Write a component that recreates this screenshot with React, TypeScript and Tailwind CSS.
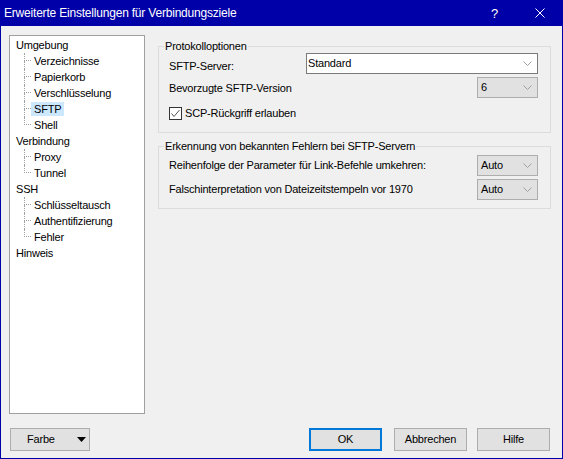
import React from "react";

type Node = { label: string; children: string[] };

const tree: Node[] = [
  {
    label: "Umgebung",
    children: ["Verzeichnisse", "Papierkorb", "Verschlüsselung", "SFTP", "Shell"],
  },
  { label: "Verbindung", children: ["Proxy", "Tunnel"] },
  { label: "SSH", children: ["Schlüsseltausch", "Authentifizierung", "Fehler"] },
  { label: "Hinweis", children: [] },
];

const selected = "SFTP";

const Chevron = () => (
  <svg width="9" height="5" viewBox="0 0 9 5">
    <polyline points="0.5,0.5 4.5,4.5 8.5,0.5" fill="none" stroke="#a0a0a0" strokeWidth="1" />
  </svg>
);

// Ausklappliste: editierbar (weiß) oder nur lesbar (grau)
const Combo = ({ value, editable, className }: { value: string; editable?: boolean; className: string }) => (
  <div
    className={`h-[21px] flex items-center justify-between border pr-[5px] ${
      editable ? "bg-white border-[#7a7a7a] pl-[1px]" : "bg-[#e1e1e1] border-[#adadad] pl-[3px]"
    } ${className}`}
  >
    <span>{value}</span>
    <Chevron />
  </div>
);

const Button = ({ label, primary, className }: { label: string; primary?: boolean; className: string }) => (
  <div
    className={`h-[23px] flex items-center justify-center bg-[#e1e1e1] ${
      primary ? "border-2 border-[#0078d7]" : "border border-[#adadad]"
    } ${className}`}
  >
    {label}
  </div>
);

const TreeView = () => (
  <div className="w-[136px] h-[379px] shrink-0 bg-white border border-[#a0a0a0] pt-[1px]">
    {tree.map((node) => (
      <div key={node.label}>
        <div className="h-[16px] flex items-center pl-[6px]">{node.label}</div>
        {node.children.map((child, i) => {
          const last = i === node.children.length - 1;
          return (
            <div key={child} className="h-[16px] flex ml-[14px]">
              {/* gepunktete Verbindungslinien */}
              <div className="w-[7px] flex flex-col">
                <div className="h-[8px] border-l border-b border-dotted border-[#a0a0a0]" />
                <div className={`flex-1 ${last ? "" : "border-l border-dotted border-[#a0a0a0]"}`} />
              </div>
              <span
                className={`self-center h-[14px] leading-[14px] px-[3px] ${
                  child === selected ? "bg-[#cce8ff]" : ""
                }`}
              >
                {child}
              </span>
            </div>
          );
        })}
      </div>
    ))}
  </div>
);

export default function App() {
  return (
    <div className="w-[563px] h-[459px] flex flex-col border-x border-b border-[#0000a8] font-['Liberation_Sans',Arial,sans-serif] text-[11px] leading-[13px] tracking-[-0.2px] text-black">
      {/* Titelleiste */}
      <div className="h-[26px] shrink-0 bg-[#0000a8] text-white flex items-center">
        <div className="flex-1 pl-[3px] text-[12px]">Erweiterte Einstellungen für Verbindungsziele</div>
        <div className="w-[45px] h-full flex items-center justify-center text-[13px]">?</div>
        <div className="w-[45px] h-full flex items-center justify-center">
          <svg width="10" height="10" viewBox="0 0 10 10">
            <path d="M0.5 0.5 L9.5 9.5 M9.5 0.5 L0.5 9.5" stroke="white" strokeWidth="1" />
          </svg>
        </div>
      </div>

      <div className="flex-1 flex flex-col bg-[#f0f0f0] pt-[9px] pl-[8px] pr-[11px] pb-[7px]">
        <div className="flex gap-[13px]">
          <TreeView />

          <div className="flex-1 flex flex-col pt-[5px]">
            <fieldset className="border border-[#dcdcdc]">
              <legend className="ml-[5px] px-[1px]">Protokolloptionen</legend>
              <div className="flex flex-col pl-[10px] pr-[12px] pb-[12px]">
                <div className="h-[21px] flex items-start justify-between">
                  <span className="pt-[7px]">SFTP-Server:</span>
                  <Combo value="Standard" editable className="w-[232px]" />
                </div>
                <div className="h-[21px] mt-[3px] flex items-center justify-between">
                  <span className="pt-[1px]">Bevorzugte SFTP-Version</span>
                  <Combo value="6" className="w-[61px]" />
                </div>
                <div className="h-[13px] mt-[9px] flex items-center gap-[3px]">
                  <div className="w-[13px] h-[13px] bg-white border border-[#333333] flex items-center justify-center">
                    <svg width="11" height="11" viewBox="0 0 11 11">
                      <polyline points="1.5,5.5 4,8.5 9.5,2" fill="none" stroke="#555555" strokeWidth="1" />
                    </svg>
                  </div>
                  <span>SCP-Rückgriff erlauben</span>
                </div>
              </div>
            </fieldset>

            <fieldset className="border border-[#dcdcdc] mt-[7px]">
              <legend className="ml-[5px] px-[1px]">Erkennung von bekannten Fehlern bei SFTP-Servern</legend>
              <div className="flex flex-col pl-[10px] pr-[12px] pt-[2px] pb-[8px]">
                <div className="h-[21px] flex items-center justify-between">
                  <span>Reihenfolge der Parameter für Link-Befehle umkehren:</span>
                  <Combo value="Auto" className="w-[61px]" />
                </div>
                <div className="h-[21px] mt-[3px] flex items-center justify-between">
                  <span>Falschinterpretation von Dateizeitstempeln vor 1970</span>
                  <Combo value="Auto" className="w-[61px]" />
                </div>
              </div>
            </fieldset>
          </div>
        </div>

        {/* Schaltflächen */}
        <div className="mt-[14px] flex items-center">
          <div className="ml-[1px] w-[80px] h-[23px] flex items-center justify-between bg-[#e1e1e1] border border-[#adadad] pl-[16px] pr-[3px]">
            <span>Farbe</span>
            <svg width="9" height="5" viewBox="0 0 9 5">
              <polygon points="0,0 9,0 4.5,5" fill="black" />
            </svg>
          </div>
          <div className="flex-1" />
          <Button label="OK" primary className="w-[73px]" />
          <Button label="Abbrechen" className="w-[73px] ml-[12px]" />
          <Button label="Hilfe" className="w-[73px] ml-[10px] mr-[1px]" />
        </div>
      </div>
    </div>
  );
}
